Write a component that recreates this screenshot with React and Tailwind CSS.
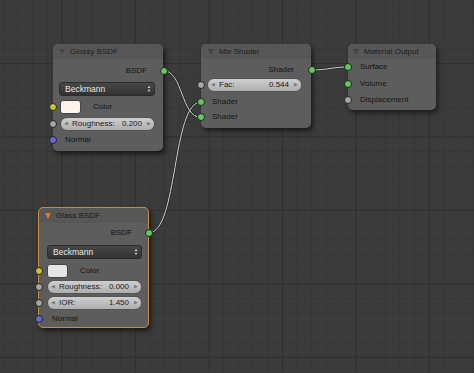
import clsx from "clsx";

const FONT = "font-['Liberation_Sans',Arial,sans-serif]";

const Socket = ({ side, color }) => (
  <span
    className={clsx(
      "absolute top-1/2 -translate-y-1/2 w-[8px] h-[8px] rounded-full border border-[#222] z-10",
      side === "in" ? "left-[-4.5px]" : "right-[-4.5px]",
      color
    )}
  />
);

const GREEN = "bg-[#61c95b]";
const GRAY = "bg-[#a6a6a6]";
const YELLOW = "bg-[#c9c62c]";
const BLUE = "bg-[#6a6ad4]";

const Header = ({ title, active, indent = "pl-[6px]" }) => (
  <div
    className={clsx(
      "h-[15px] flex items-center gap-[3px] rounded-t-[5px] bg-[#575757] text-[8px] text-[#1c1c1c]",
      indent
    )}
  >
    <span
      className={clsx(
        "w-0 h-0 border-l-[3.5px] border-r-[3.5px] border-t-[6px] border-l-transparent border-r-transparent",
        active ? "border-t-[#e0772a]" : "border-t-[#454545]"
      )}
    />
    <span className="ml-[2px]">{title}</span>
  </div>
);

const OutRow = ({ label, pr = "pr-[16px]" }) => (
  <div className={clsx("relative h-[16px] flex items-center justify-end text-[8px] text-[#141414]", pr)}>
    {label}
    <Socket side="out" color={GREEN} />
  </div>
);

const InRow = ({ label, color, pl = "pl-[12px]", h = "h-[16px]" }) => (
  <div className={clsx("relative flex items-center text-[8px] text-[#141414]", h, pl)}>
    {label}
    <Socket side="in" color={color} />
  </div>
);

const Dropdown = ({ mx }) => (
  <div className={clsx("h-[14px] rounded-[3px] bg-gradient-to-b from-[#474747] to-[#333] border border-[#2c2c2c] flex items-center justify-between pl-[5px] pr-[3px] text-[8.5px] text-[#e8e8e8]", mx)}>
    <span>Beckmann</span>
    <span className="flex flex-col items-center leading-none text-[4px] text-[#ddd]">
      <span>▲</span>
      <span>▼</span>
    </span>
  </div>
);

const Slider = ({ label, value, mx, socket = true }) => (
  <div className="relative">
    {socket && <Socket side="in" color={GRAY} />}
    <div className={clsx("h-[14px] rounded-full bg-gradient-to-b from-[#cfcfcf] to-[#aeaeae] border border-[#555] flex items-center pl-[3px] pr-[3px] text-[8px] text-[#1b1b1b]", mx)}>
      <span className="text-[5px] text-[#7a7a7a]">◀</span>
      <span className="ml-[4px]">{label}</span>
      <span className="ml-auto mr-[5px]">{value}</span>
      <span className="text-[5px] text-[#7a7a7a]">▶</span>
    </div>
  </div>
);

const ColorRow = ({ swatch, mx, labelGap }) => (
  <div className="relative h-[14px] flex items-center">
    <Socket side="in" color={YELLOW} />
    <div className={clsx("flex items-center", mx)}>
      <span className={clsx("w-[21px] h-[14px] rounded-[3px] border border-[#444]", swatch)} />
      <span className={clsx("text-[8px] text-[#141414]", labelGap)}>Color</span>
    </div>
  </div>
);

const NODE = "absolute rounded-[5px] bg-[#5d5d5d] shadow-[2px_3px_5px_rgba(0,0,0,0.55)]";

export default function App() {
  return (
    <div
      className={clsx(
        "relative w-[474px] h-[373px] overflow-hidden bg-[#3b3b3b]",
        "bg-[linear-gradient(to_right,#303030_1px,transparent_1px),linear-gradient(to_bottom,#303030_1px,transparent_1px),linear-gradient(to_right,#363636_1px,transparent_1px),linear-gradient(to_bottom,#363636_1px,transparent_1px)]",
        "bg-[length:73.5px_73.5px,73.5px_73.5px,14.7px_14.7px,14.7px_14.7px]",
        "bg-[position:61.5px_63px,61.5px_63px,2.7px_4.2px,2.7px_4.2px]",
        FONT
      )}
    >
      {/* links */}
      <svg className="absolute inset-0" width="474" height="373">
        <g fill="none" strokeLinecap="round">
          <path d="M163.5 70.5 C183 70.5, 181 117.5, 200.5 117.5" stroke="#2a2a2a" strokeWidth="2.6" />
          <path d="M149 233 C178 233, 172 102, 200.5 102" stroke="#2a2a2a" strokeWidth="2.6" />
          <path d="M311.5 70 C330 70, 330 67, 348.5 67" stroke="#2a2a2a" strokeWidth="2.6" />
          <path d="M163.5 70.5 C183 70.5, 181 117.5, 200.5 117.5" stroke="#d2d2d2" strokeWidth="1" />
          <path d="M149 233 C178 233, 172 102, 200.5 102" stroke="#d2d2d2" strokeWidth="1" />
          <path d="M311.5 70 C330 70, 330 67, 348.5 67" stroke="#d2d2d2" strokeWidth="1" />
        </g>
      </svg>

      {/* Glossy BSDF */}
      <div className={clsx(NODE, "left-[53px] top-[44px] w-[110px] h-[107px]")}>
        <Header title="Glossy BSDF" />
        <div className="flex flex-col pt-[4px]">
          <OutRow label="BSDF" />
          <div className="mt-[3px]">
            <Dropdown mx="ml-[6px] mr-[8px]" />
          </div>
          <div className="mt-[4px]">
            <ColorRow swatch="bg-[#fff4ec]" mx="ml-[7px]" labelGap="ml-[12px]" />
          </div>
          <div className="mt-[3px]">
            <Slider label="Roughness:" value="0.200" mx="ml-[7px] mr-[8px]" />
          </div>
          <InRow label="Normal" color={BLUE} h="h-[18px]" />
        </div>
      </div>

      {/* Mix Shader */}
      <div className={clsx(NODE, "left-[201px] top-[44px] w-[110px] h-[84px]")}>
        <Header title="Mix Shader" indent="pl-[7px]" />
        <div className="flex flex-col pt-[3px]">
          <OutRow label="Shader" pr="pr-[17px]" />
          <Slider label="Fac:" value="0.544" mx="ml-[6px] mr-[9px]" />
          <div className="h-[2px]" />
          <InRow label="Shader" color={GREEN} pl="pl-[11px]" h="h-[15.5px]" />
          <InRow label="Shader" color={GREEN} pl="pl-[11px]" h="h-[15.5px]" />
        </div>
      </div>

      {/* Material Output */}
      <div className={clsx(NODE, "left-[348px] top-[44px] w-[88px] h-[66px]")}>
        <Header title="Material Output" indent="pl-[5px]" />
        <div className="flex flex-col">
          <InRow label="Surface" color={GREEN} h="h-[16.5px]" />
          <InRow label="Volume" color={GREEN} h="h-[16.5px]" />
          <InRow label="Displacement" color={GRAY} h="h-[16.5px]" />
        </div>
      </div>

      {/* Glass BSDF */}
      <div className={clsx(NODE, "left-[38px] top-[207px] w-[111px] h-[121px] border-[1.5px] border-[#c98a45]")}>
        <Header title="Glass BSDF" active indent="pl-[6px]" />
        <div className="flex flex-col pt-[2px]">
          <OutRow label="BSDF" />
          <div className="mt-[4px]">
            <Dropdown mx="ml-[8px] mr-[6px]" />
          </div>
          <div className="mt-[5px]">
            <ColorRow swatch="bg-[#e4e4e4]" mx="ml-[8px]" labelGap="ml-[12px]" />
          </div>
          <div className="mt-[2px]">
            <Slider label="Roughness:" value="0.000" mx="ml-[8px] mr-[6px]" />
          </div>
          <div className="mt-[2px]">
            <Slider label="IOR:" value="1.450" mx="ml-[8px] mr-[6px]" />
          </div>
          <InRow label="Normal" color={BLUE} pl="pl-[13px]" h="h-[18px]" />
        </div>
      </div>
    </div>
  );
}
